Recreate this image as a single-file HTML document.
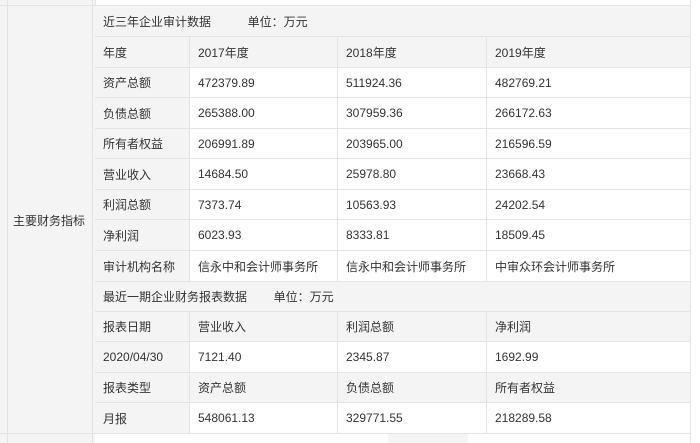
<!DOCTYPE html>
<html><head><meta charset="utf-8"><style>
*{margin:0;padding:0;box-sizing:border-box}
body{width:700px;height:443px;overflow:hidden;background:#fff;font-family:"Liberation Sans","Noto Sans CJK SC",sans-serif;font-size:12px;color:#333;position:relative}
.a{position:absolute}
.c{position:absolute;border-right:1px solid #e4e4e4;border-bottom:1px solid #e4e4e4;padding-left:8px;display:flex;align-items:center;white-space:nowrap}
.g{background:#f4f4f4}
.w{background:#fff}
</style></head><body>
<div class="a g" style="left:0;top:0;width:95px;height:443px"></div>
<div class="a" style="left:7px;top:0;width:1px;height:443px;background:#e2e2e2"></div>
<div class="a" style="left:92px;top:0;width:1px;height:443px;background:#e2e2e2"></div>
<div class="a" style="left:0;top:5px;width:95px;height:1px;background:#e4e4e4"></div>
<div class="a" style="left:0;top:433px;width:95px;height:1px;background:#e4e4e4"></div>
<div class="a" style="left:13px;top:212px">主要财务指标</div>
<div class="a" style="left:95px;top:0;width:596px;height:6px;border-bottom:1px solid #e4e4e4;border-right:1px solid #e4e4e4;border-left:1px solid #e4e4e4"></div>
<div id="t"></div>
<div class="a g" style="left:388px;top:434px;width:80px;height:9px"></div>
<div class="a" style="left:690px;top:0;width:1px;height:443px;background:#e4e4e4"></div>
<script>
var cols=[95,190,338,487,691];
var rows=[
[6,37,'t','近三年企业审计数据&nbsp;&nbsp;&nbsp;&nbsp;&nbsp;&nbsp;&nbsp;&nbsp;&nbsp;&nbsp;&nbsp;单位：万元'],
[37,68,'g',['年度','2017年度','2018年度','2019年度']],
[68,98,'w',['资产总额','472379.89','511924.36','482769.21']],
[98,129,'w',['负债总额','265388.00','307959.36','266172.63']],
[129,159,'w',['所有者权益','206991.89','203965.00','216596.59']],
[159,190,'w',['营业收入','14684.50','25978.80','23668.43']],
[190,220,'w',['利润总额','7373.74','10563.93','24202.54']],
[220,251,'w',['净利润','6023.93','8333.81','18509.45']],
[251,282,'w',['审计机构名称','信永中和会计师事务所','信永中和会计师事务所','中审众环会计师事务所']],
[282,312,'t','最近一期企业财务报表数据&nbsp;&nbsp;&nbsp;&nbsp;&nbsp;&nbsp;&nbsp;&nbsp;单位：万元'],
[312,342,'g',['报表日期','营业收入','利润总额','净利润']],
[342,373,'w',['2020/04/30','7121.40','2345.87','1692.99']],
[373,403,'g',['报表类型','资产总额','负债总额','所有者权益']],
[403,434,'w',['月报','548061.13','329771.55','218289.58']]
];
var h='';
rows.forEach(function(r){
 var top=r[0],ht=r[1]-r[0];
 if(r[2]=='t'){h+='<div class="c g" style="left:95px;top:'+top+'px;width:596px;height:'+ht+'px">'+r[3]+'</div>';}
 else for(var i=0;i<4;i++){
  var cl=(i==0||r[2]=='g')?'g':'w';
  h+='<div class="c '+cl+'" style="left:'+cols[i]+'px;top:'+top+'px;width:'+(cols[i+1]-cols[i])+'px;height:'+ht+'px">'+r[3][i]+'</div>';
 }
});
document.getElementById('t').innerHTML=h;
</script>
</body></html>
